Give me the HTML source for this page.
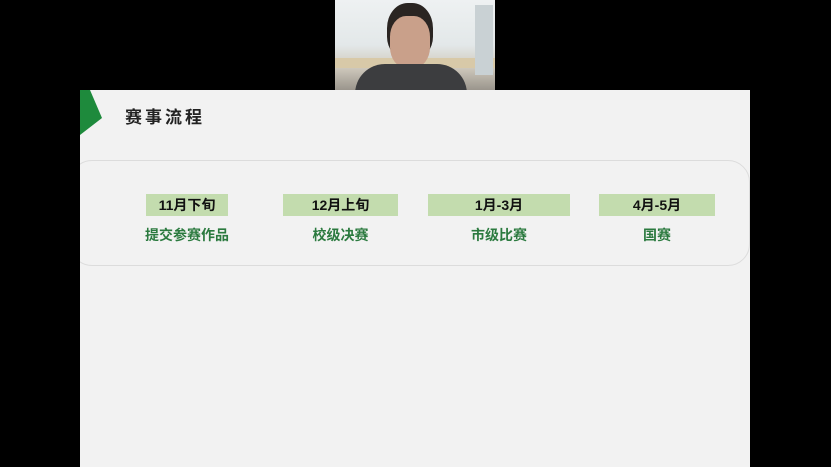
<!DOCTYPE html>
<html><head><meta charset="utf-8"><style>
body{margin:0;width:831px;height:467px;background:#000;position:relative;overflow:hidden;font-family:"Liberation Sans","Noto Sans CJK SC",sans-serif}
.slide{position:absolute;left:80px;top:90px;width:670px;height:377px;background:#f2f2f2;overflow:hidden}
.cam{position:absolute;left:335px;top:0;width:160px;height:90px;background:linear-gradient(180deg,#eef1f2 0%,#e3e8e9 50%,#cfc9bd 75%,#9a958c 100%);overflow:hidden}
.title{position:absolute;left:45px;top:13px;font-size:17px;font-weight:bold;letter-spacing:3px;color:#222}
.box{position:absolute;left:-10px;top:70px;width:678px;height:104px;border:1px solid #dcdcdc;border-radius:22px}
.lab{position:absolute;top:104px;height:22px;background:#c3dcae;font-size:14px;font-weight:bold;color:#111;text-align:center;line-height:22px}
.sub{position:absolute;top:135px;font-size:14px;font-weight:bold;color:#2b7a3f;text-align:center}
</style></head><body>
<div class="cam">
<div style="position:absolute;left:0;top:58px;width:160px;height:10px;background:#d8c9a8"></div>
<div style="position:absolute;left:140px;top:5px;width:18px;height:70px;background:#c9d1d4"></div>
<div style="position:absolute;left:52px;top:3px;width:46px;height:56px;border-radius:45% 45% 40% 40%;background:#2a2522"></div>
<div style="position:absolute;left:55px;top:16px;width:40px;height:52px;border-radius:40%;background:#c9a08a"></div>
<div style="position:absolute;left:20px;top:64px;width:112px;height:40px;border-radius:30px 30px 0 0;background:#3c3d3f"></div>
</div>
<div class="slide">
<svg style="position:absolute;left:0;top:0" width="30" height="50"><polygon points="0,0 10,0 22,28 0,45" fill="#1e8a3c"/></svg>
<div class="title">赛事流程</div>
<div class="box"></div>
<div class="lab" style="left:66px;width:82px">11月下旬</div>
<div class="sub" style="left:57px;width:100px">提交参赛作品</div>
<div class="lab" style="left:203px;width:115px">12月上旬</div>
<div class="sub" style="left:203px;width:115px">校级决赛</div>
<div class="lab" style="left:348px;width:142px">1月-3月</div>
<div class="sub" style="left:348px;width:142px">市级比赛</div>
<div class="lab" style="left:519px;width:116px">4月-5月</div>
<div class="sub" style="left:519px;width:116px">国赛</div>
</div>
</body></html>
